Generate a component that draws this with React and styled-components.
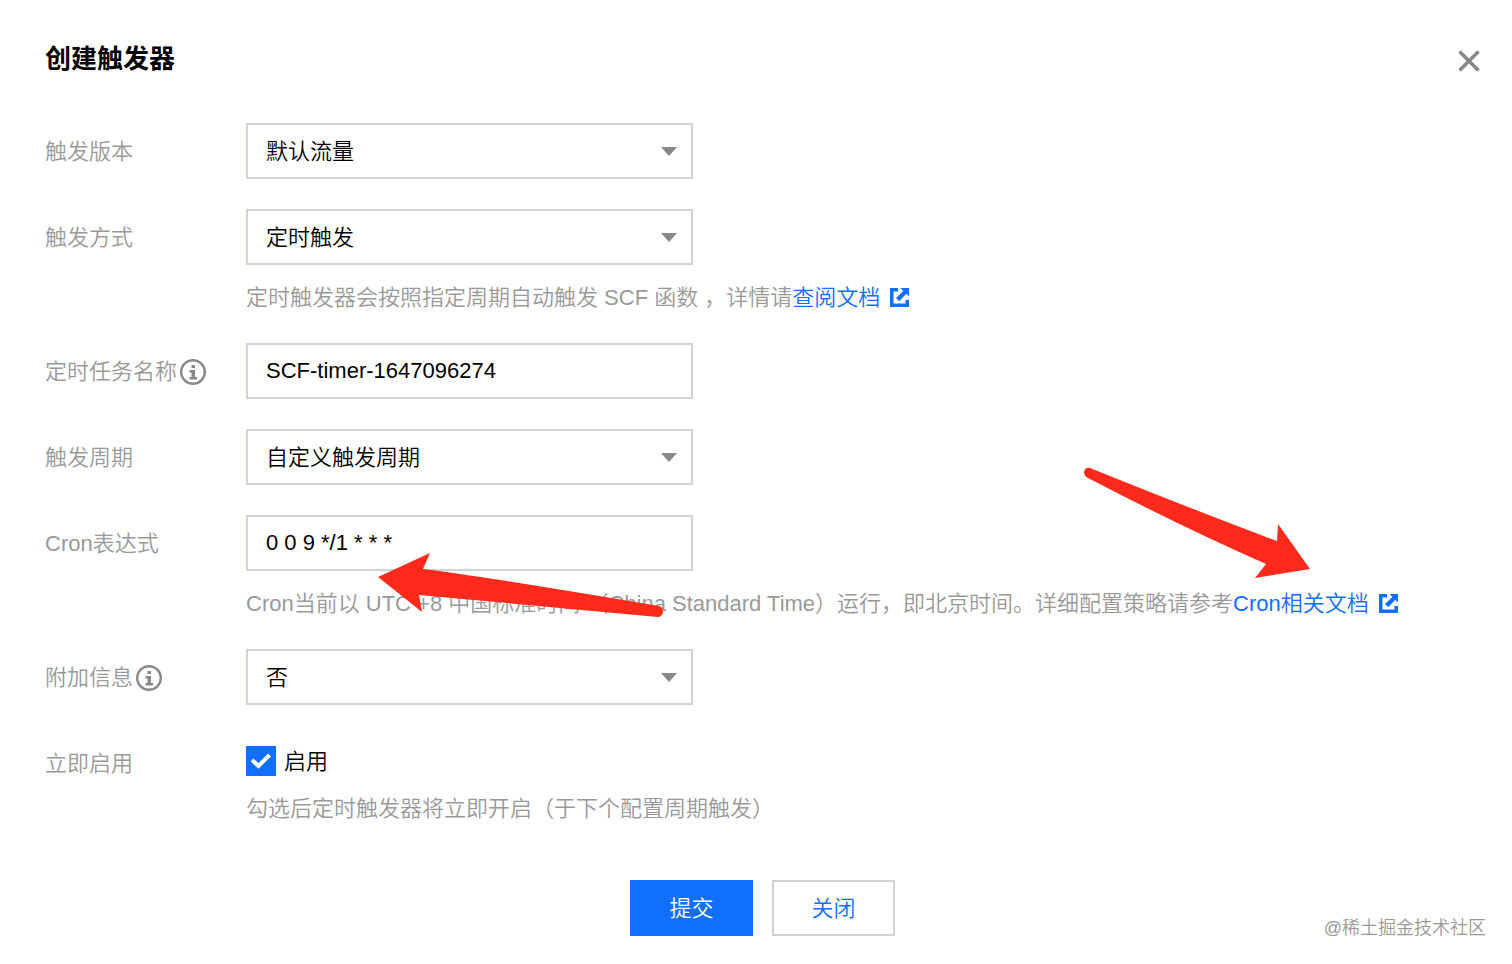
import React, { useState } from 'react';
import styled, { createGlobalStyle } from 'styled-components';

const ExternalIcon = () => (
    <LinkIcon viewBox="0 0 19 19" aria-hidden="true">
        <path d="M0 0h8v3.500H3.500v12h12V12H19v7H0z" />
        <path d="M10.500 0H19v8.500l-2.700-2.700-7 7.500-3.300-3.200 7.300-7.200z" />
    </LinkIcon>
);

const InfoIcon = () => (
    <InfoSvg viewBox="0 0 26 26" aria-hidden="true">
        <circle cx="13" cy="13" r="11.8" fill="none" stroke="#888888" strokeWidth="2.4" />
        <path d="M11.5 6h3.500v3h-3.500zM9.500 11H15v7h2v2.500H9.500V18h2v-4.500h-2z" fill="#888888" />
    </InfoSvg>
);

const SelectField = ({ id, value }) => (
    <SelectWrap>
        <Select id={id} defaultValue={value}>
            <option value={value}>{value}</option>
        </Select>
    </SelectWrap>
);

const App = () => {
    const [name, setName] = useState('SCF-timer-1647096274');
    const [cron, setCron] = useState('0 0 9 */1 * * *');
    const [enabled, setEnabled] = useState(true);

    return (
        <Page>
            <GlobalStyle />
            <Header>
                <Title>创建触发器</Title>
                <CloseButton type="button" aria-label="关闭窗口">
                    <svg width="22" height="22" viewBox="0 0 22 22">
                        <path d="M1.5 1.5l19 19M20.5 1.5l-19 19" stroke="#888888" strokeWidth="3.6" />
                    </svg>
                </CloseButton>
            </Header>
            <form onSubmit={(event) => event.preventDefault()}>
                <Rows>
                    <Row>
                        <Label htmlFor="version">触发版本</Label>
                        <Field><SelectField id="version" value="默认流量" /></Field>
                    </Row>
                    <Row>
                        <Label htmlFor="method">触发方式</Label>
                        <Field>
                            <SelectField id="method" value="定时触发" />
                            <Hint>
                                定时触发器会按照指定周期自动触发 SCF 函数 ，详情请<Link href="#doc">查阅文档<ExternalIcon /></Link>
                            </Hint>
                        </Field>
                    </Row>
                    <Row>
                        <Label htmlFor="name">定时任务名称<InfoIcon /></Label>
                        <Field>
                            <Input id="name" type="text" value={name} onChange={(event) => setName(event.target.value)} />
                        </Field>
                    </Row>
                    <Row>
                        <Label htmlFor="period">触发周期</Label>
                        <Field><SelectField id="period" value="自定义触发周期" /></Field>
                    </Row>
                    <Row>
                        <Label htmlFor="cron">Cron表达式</Label>
                        <Field>
                            <Input id="cron" type="text" value={cron} onChange={(event) => setCron(event.target.value)} />
                            <Hint>
                                Cron当前以 UTC +8 中国标准时间 （China Standard Time）运行，即北京时间。详细配置策略请参考<Link href="#cron">Cron相关文档<ExternalIcon /></Link>
                            </Hint>
                            <InputArrow viewBox="0 0 285 64" aria-hidden="true">
                                <path d="M0 24L52 0L45 16Q90 21 281 53Q285 54 285 59Q284 64 280 64Q150 52 41 42L44 59Z" />
                            </InputArrow>
                            <LinkArrow viewBox="0 0 227 112" aria-hidden="true">
                                <path d="M6 1Q1 0 0 5Q0 9 4 11Q100 61 182 97L171 111L226 102L194 57L193 74Q110 43 6 1Z" />
                            </LinkArrow>
                        </Field>
                    </Row>
                    <Row>
                        <Label htmlFor="extra">附加信息<InfoIcon /></Label>
                        <Field><SelectField id="extra" value="否" /></Field>
                    </Row>
                    <Row>
                        <Label as="span">立即启用</Label>
                        <Field>
                            <CheckLabel>
                                <CheckBox>
                                    <input type="checkbox" checked={enabled} onChange={(event) => setEnabled(event.target.checked)} />
                                    <svg viewBox="0 0 30 30" aria-hidden="true">
                                        <path d="M6 14l6.500 6L23.500 9" fill="none" stroke="#ffffff" strokeWidth="4" />
                                    </svg>
                                </CheckBox>
                                <CheckText>启用</CheckText>
                            </CheckLabel>
                            <Hint $tight>勾选后定时触发器将立即开启（于下个配置周期触发）</Hint>
                        </Field>
                    </Row>
                </Rows>
                <Footer>
                    <Button type="submit" $primary>提交</Button>
                    <Button type="button">关闭</Button>
                </Footer>
            </form>
            <Watermark>@稀土掘金技术社区</Watermark>
        </Page>
    );
};

export default App;

const GlobalStyle = createGlobalStyle`
* {
    box-sizing: border-box;
}
body {
    margin: 0;
    background-color: #ffffff;
}
body, input, select, button {
    font-family: 'Liberation Sans', 'Noto Sans CJK SC', sans-serif;
    font-size: 22px;
    font-weight: 350;
}
`;

const Page = styled.main`
position: relative;
min-height: 100vh;
padding: 40px 32px 28px 45px;
`;

const Header = styled.header`
display: flex;
justify-content: space-between;
align-items: flex-end;
margin-bottom: 43px;
`;

const Title = styled.h1`
margin: 0;
padding-bottom: 2px;
font-size: 26px;
line-height: 38px;
font-weight: 700;
color: #000000;
`;

const CloseButton = styled.button`
display: flex;
padding: 0px 0px 8px 0px;
border: none;
background: none;
cursor: pointer;
`;

const Rows = styled.div`
display: flex;
flex-direction: column;
gap: 30px;
`;

const Row = styled.div`
display: grid;
grid-template-columns: 201px 1fr;
align-items: start;
`;

const Label = styled.label`
display: flex;
gap: 3px;
height: 56px;
line-height: 58px;
color: #999999;
white-space: nowrap;
`;

const InfoSvg = styled.svg`
width: 26px;
height: 26px;
margin-top: 16px;
`;

const Field = styled.div`
position: relative;
min-width: 0;
`;

const SelectWrap = styled.div`
position: relative;
width: 447px;
max-width: 100%;
&::after {
    content: '';
    position: absolute;
    top: 24px;
    right: 16px;
    border: 8px solid transparent;
    border-top: 9px solid #888888;
    border-bottom: none;
    pointer-events: none;
}
`;

const Select = styled.select`
display: block;
appearance: none;
width: 100%;
height: 56px;
padding: 0px 40px 0px 18px;
border: 2px solid #cfd3da;
border-radius: 0;
background-color: #ffffff;
color: #000000;
`;

const Input = styled.input`
display: block;
width: 447px;
max-width: 100%;
height: 56px;
padding: 0px 18px;
border: 2px solid #cfd3da;
background-color: #ffffff;
color: #000000;
`;

const Hint = styled.p`
margin: ${(props) => (props.$tight ? '7px' : '18px')} 0px 0px 0px;
line-height: 30px;
color: #999999;
`;

const Link = styled.a`
color: #106fff;
text-decoration: none;
`;

const LinkIcon = styled.svg`
width: 19px;
height: 19px;
margin-left: 10px;
vertical-align: -2px;
fill: #106fff;
`;

const CheckLabel = styled.label`
display: inline-flex;
align-items: center;
gap: 8px;
height: 52px;
color: #000000;
`;

const CheckText = styled.span`
padding-bottom: 4px;
`;

const CheckBox = styled.span`
display: grid;
width: 30px;
height: 30px;
input, svg {
    grid-area: 1 / 1;
    width: 30px;
    height: 30px;
    margin: 0;
}
input {
    appearance: none;
    border: 2px solid #cfd3da;
}
input:checked {
    border-color: #106fff;
    background-color: #106fff;
}
svg {
    pointer-events: none;
}
`;

const Footer = styled.footer`
display: flex;
justify-content: center;
gap: 19px;
margin-top: 56px;
`;

const Button = styled.button`
width: 123px;
height: 56px;
padding: 0px 0px 4px 0px;
border: 2px solid ${(props) => (props.$primary ? '#106fff' : '#cfd3da')};
background-color: ${(props) => (props.$primary ? '#106fff' : '#ffffff')};
color: ${(props) => (props.$primary ? '#ffffff' : '#106fff')};
cursor: pointer;
`;

// hand-drawn pointers lying over the form
const Arrow = styled.svg`
position: absolute;
fill: #ff2a1c;
pointer-events: none;
`;

const InputArrow = styled(Arrow)`
left: 132px;
top: 38px;
width: 285px;
height: 64px;
`;

const LinkArrow = styled(Arrow)`
left: 838px;
top: -48px;
width: 227px;
height: 112px;
`;

const Watermark = styled.div`
position: absolute;
right: 26px;
bottom: 24px;
font-size: 18px;
line-height: 24px;
color: #999999;
`;
